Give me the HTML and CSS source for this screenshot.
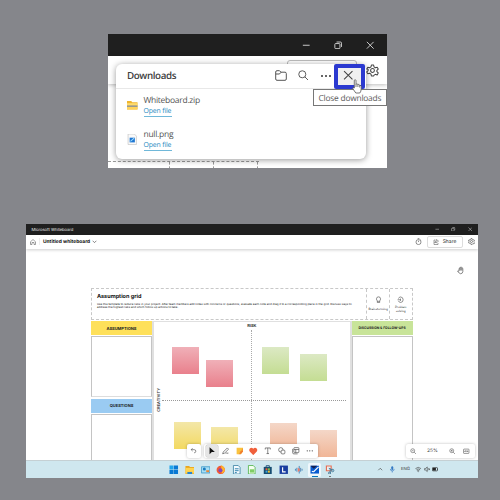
FILE: index.html
```html
<!DOCTYPE html>
<html lang="en">
<head>
<meta charset="utf-8">
<title>Whiteboard</title>
<link rel="stylesheet" href="styles.css">
</head>
<body>
<svg width="0" height="0" class="defs">
  <defs>
    <symbol id="gear" viewBox="0 0 24 24"><path d="M10 2h4l.8 3.400 2.500 1.500 3.300-1 2 3.500-2.500 2.400v2.400l2.500 2.400-2 3.500-3.300-1-2.500 1.500L14 22h-4l-.8-3.400-2.500-1.500-3.300 1-2-3.500 2.500-2.400V9.800L1.400 9.400l2-3.500 3.300 1 2.500-1.500z"/><circle cx="12" cy="12" r="3.500"/></symbol>
    <symbol id="restore" viewBox="0 0 10 10"><rect x="1" y="3" width="6" height="6" rx="1"/><path d="M3 1.200h4.500q1.300 0 1.300 1.300V7"/></symbol>
    <symbol id="close" viewBox="0 0 10 10"><path d="M1 1l8 8M9 1l-8 8"/></symbol>
    <symbol id="min" viewBox="0 0 10 10"><path d="M1 5h8"/></symbol>
  </defs>
</svg>

<section class="shot popup-shot">
  <div class="titlebar">
    <svg class="ic"><use href="#min"/></svg>
    <svg class="ic"><use href="#restore"/></svg>
    <svg class="ic"><use href="#close"/></svg>
  </div>
  <div class="appbar"><div class="ghost-button"></div><svg class="ic gear"><use href="#gear"/></svg></div>
  <div class="dashes"><i></i><i></i><i></i></div>
  <div class="downloads">
    <header>
      <h1>Downloads</h1>
      <svg class="hi folder" viewBox="0 0 12 11"><path d="M.7 9V2Q.7.700 2 .7h2.500L6 2.200h4q1.300 0 1.300 1.300V9q0 1.300-1.300 1.300H2Q.7 10.300.7 9zM.7 4h3.800L6 2.200"/></svg>
      <svg class="hi search" viewBox="0 0 11 11"><circle cx="4.500" cy="4.500" r="3.700"/><path d="M7.200 7.200l3.300 3.300"/></svg>
      <svg class="hi dots" viewBox="0 0 12 4"><circle cx="2" cy="2" r="1"/><circle cx="6" cy="2" r="1"/><circle cx="10" cy="2" r="1"/></svg>
    </header>
    <div class="file">
      <svg class="fi" viewBox="0 0 10 10"><path fill="#efb52f" d="M0 1h4l1 1.200h5V9H0z"/><path fill="#ffdb6c" d="M0 3h10v2.500H0z"/><path fill="#8a94a0" d="M0 5.200h10v1.400H0z"/><path fill="#ffd35a" d="M0 6.600h10V9H0z"/></svg>
      <div><p>Whiteboard.zip</p><a>Open file</a></div>
    </div>
    <div class="file second">
      <svg class="fi" viewBox="0 0 10 10"><path fill="#fafafa" stroke="#b5b5b5" stroke-width=".5" d="M1 0h6l2 2v8H1z"/><path fill="#1f76d2" d="M2.500 3.500h5v4.500h-5z"/><path d="M3.300 7l3.500-3" stroke="#9bdcff"/></svg>
      <div><p>null.png</p><a>Open file</a></div>
    </div>
  </div>
  <div class="highlight"><svg class="ic"><use href="#close"/></svg></div>
  <div class="tooltip">Close downloads</div>
  <svg class="pointer" viewBox="0 0 10 15"><path d="M2.300 9V1.700Q2.300.7 3.100.7T4 1.700V5.500Q4.300 4.600 5.100 4.900T5.900 5.900Q6.400 5 7.100 5.500T7.700 6.500Q9.200 6 9.200 7.500V10Q9.200 12.300 7.800 14H3.800L.7 9.500Q.6 8.200 2.300 9zM4 5.500V8M5.900 5.900V8M7.700 6.500V8.500"/></svg>
</section>

<section class="shot board-shot">
  <div class="titlebar small"><span>Microsoft Whiteboard</span>
    <svg class="ic"><use href="#min"/></svg>
    <svg class="ic"><use href="#restore"/></svg>
    <svg class="ic"><use href="#close"/></svg>
  </div>
  <div class="toolbar">
    <svg class="ti home" viewBox="0 0 12 12"><path d="M1 5.500L6 1l5 4.500V11H8V7H4v4H1z"/></svg>
    <i class="sep"></i>
    <b>Untitled whiteboard</b>
    <svg class="ti chev" viewBox="0 0 8 6"><path d="M1 1l3 3 3-3"/></svg>
    <svg class="ti timer" viewBox="0 0 12 12"><circle cx="6" cy="7" r="4.300"/><path d="M4.500 1h3M6 4.500V7M9.500 3l1 1"/></svg>
    <div class="share"><svg class="ti" viewBox="0 0 12 12"><path d="M5 2H2v9h8V8M7 1l4 3.200-4 3.200V5.500Q4.500 5.500 3.800 8 4 3.500 7 3z"/></svg><span>Share</span></div>
    <svg class="ti setting"><use href="#gear"/></svg>
  </div>

  <div class="canvas">
    <svg class="hand" viewBox="0 0 14 14"><path d="M3.500 8V3.500q.7-1.200 1.600 0V2q.8-1.200 1.700 0v-.3q.9-1 1.700.3V3q.9-1 1.700.3V9q-.4 3.500-3.800 3.700Q3.800 12.500 1 8q.8-1.200 2.500.8M5.100 3.500V7M6.800 2v5M8.500 3v4"/></svg>
    <div class="template">
      <div class="head">
        <div class="intro"><h2>Assumption grid</h2><p>Use this template to reduce risks in your project. After team members add notes with concerns or questions, evaluate each note and drag it to a corresponding place in the grid. Discuss ways to<br>address the highest risks and which follow up actions to take.</p></div>
        <div class="tag"><svg class="ti" viewBox="0 0 12 12"><path d="M4 8Q2.500 6.500 2.500 4.500 2.500 1 6 1t3.500 3.500Q9.500 6.500 8 8v2.800H4zM4 8.700h4"/></svg><span>Brainstorming</span></div>
        <div class="tag"><svg class="ti" viewBox="0 0 12 12"><path d="M2.500 4Q3.500 1.200 6.300 1.200 10.500 1.700 10.500 6T6.300 10.700Q3.500 10.700 2.500 8M1 6h5M6 4v4"/></svg><span>Problem<br>solving</span></div>
      </div>
      <div class="columns">
        <div class="side left">
          <div class="label yellow">ASSUMPTIONS</div><div class="box first"></div>
          <div class="label blue">QUESTIONS</div><div class="box"></div>
        </div>
        <div class="matrix"><span class="risk">RISK</span><span class="creativity">CREATIVITY</span><i class="axis-v"></i><i class="axis-h"></i></div>
        <div class="side right"><div class="label green">DISCUSSION &amp; FOLLOW-UPS</div><div class="box"></div></div>
      </div>
    </div>
    <i class="note red n1"></i><i class="note red n2"></i><i class="note lime n3"></i><i class="note lime n4"></i>
    <i class="note gold n5"></i><i class="note gold n6"></i><i class="note peach n7"></i><i class="note peach n8"></i>

    <div class="float undo"><svg class="ti" viewBox="0 0 12 12"><path d="M4.500 2L2 4.500 4.500 7M2 4.500h5q3 0 3 2.700T7 10"/></svg></div>
    <div class="float tools">
      <span class="cell active"><svg viewBox="0 0 12 12"><path fill="#111" d="M2.500.5v11L6 8h5z"/></svg></span>
      <span class="cell"><svg class="ti" viewBox="0 0 12 12"><path d="M2 8l6.500-6.500 2 2L4 10l-3 .8zM6 11q1.500-3 2.500-1.300T11 9"/></svg></span>
      <span class="cell"><svg viewBox="0 0 12 12"><path fill="#f9c33f" d="M1 1h10.500v6L8 11.500H1z"/><path fill="#f0762e" d="M11.500 1v6L7 11.500H4L7 7z" opacity=".6"/><path fill="#f0762e" d="M11.500 6.500L7 11.500V7z"/></svg></span>
      <span class="cell"><svg class="heart" viewBox="0 0 12 12"><path fill="#f0603c" d="M6 11.500L1 6.500Q-.6 3.500 1.600 1.600 4 .2 6 2.500 8 .2 10.400 1.600 12.600 3.500 11 6.500z"/></svg></span>
      <span class="cell"><svg class="ti" viewBox="0 0 12 12"><path d="M2 4V1.500h8V4M6 1.500v9M4 10.500h4"/></svg></span>
      <span class="cell"><svg class="ti" viewBox="0 0 12 12"><circle cx="4.500" cy="4.500" r="3.500"/><rect x="5" y="5" width="6" height="6" rx="1.500" fill="#fff"/></svg></span>
      <span class="cell"><svg class="ti" viewBox="0 0 12 12"><rect x="3" y="1" width="8" height="8" rx="1"/><path d="M1 3v6q0 2 2 2h6M3 4h8M6 4v5"/></svg></span>
      <span class="cell"><svg viewBox="0 0 12 12" fill="#444"><circle cx="2" cy="6" r="1"/><circle cx="6" cy="6" r="1"/><circle cx="10" cy="6" r="1"/></svg></span>
    </div>
    <div class="float zoom">
      <svg class="ti" viewBox="0 0 12 12"><circle cx="5" cy="5" r="3.600"/><path d="M7.700 7.700L11 11M3.500 5h3"/></svg>
      <span>25%</span>
      <svg class="ti" viewBox="0 0 12 12"><circle cx="5" cy="5" r="3.600"/><path d="M7.700 7.700L11 11M3.500 5h3M5 3.500v3"/></svg>
      <svg class="ti" viewBox="0 0 12 12"><rect x="1" y="2" width="10" height="8" rx="1"/><path d="M3 6h6M4.500 4.500L3 6l1.500 1.500M7.500 4.500L9 6 7.500 7.500"/></svg>
    </div>
  </div>

  <div class="taskbar">
    <div class="apps">
      <span><svg viewBox="0 0 10 10" fill="#0879d4"><path fill="#22a5ec" d="M.5.5h4.300v4.300H.5z"/><path d="M5.200.5h4.300v4.300H5.200zM.5 5.200h4.300v4.300H.5zM5.200 5.200h4.300v4.300H5.200z"/></svg></span>
      <span><svg viewBox="0 0 10 10"><path fill="#e9a51d" d="M.5 1h3.800l1 1h4.200v7.500h-9z"/><path fill="#ffd34f" d="M.5 3h9v6h-9z"/><path fill="#2785cf" d="M2.500 7.300h5v2.200h-5z"/></svg></span>
      <span><svg viewBox="0 0 10 10"><path fill="#2b91c8" d="M.3 1.500h9.400v7.300H.3z"/><path fill="#a7def3" d="M1 2.300h8v5.700H1z"/><circle cx="3.500" cy="4.300" r="1.600" fill="#1a7cc0"/><path fill="#e88635" d="M5.500 5.500h3v2h-3z"/></svg></span>
      <span><svg viewBox="0 0 10 10"><circle cx="5" cy="5.300" r="4.400" fill="#f15a35"/><path fill="#ffb52b" d="M5.500 0Q9.700 2.500 9.300 6 8 9 5 9 8 7 5.500 4z"/><circle cx="4.700" cy="5.500" r="2.100" fill="#8149bd"/></svg></span>
      <span><svg viewBox="0 0 10 10"><path fill="#f4fbff" stroke="#2b789c" stroke-width=".8" d="M1.500.5h5l2 2v7h-7z"/><path stroke="#287daa" d="M3 4h4M3 6h4M3 8h2"/></svg></span>
      <span><svg viewBox="0 0 10 10"><path fill="#f4fff1" stroke="#43ad3c" stroke-width=".8" d="M1.500.5h5l2 2v7h-7z"/><path fill="#7fcd66" d="M3 4.500h4.500V8H3z"/></svg></span>
      <span><svg viewBox="0 0 10 10"><path fill="#174d72" d="M.8 2h8.400v7.500H.8z"/><path fill="none" stroke="#174d72" d="M3.300 2V.8h3.400V2"/><path fill="#ed5a35" d="M2.700 3.500h2v2h-2z"/><path fill="#7cc344" d="M5.200 3.500h2v2h-2z"/><path fill="#34a9e2" d="M2.700 6h2v2h-2z"/><path fill="#f5c431" d="M5.200 6h2v2h-2z"/></svg></span>
      <span><svg viewBox="0 0 10 10"><path fill="#193ea0" d="M.6.6h8.800v8.800H.6z"/><path stroke="#fff" stroke-width="1.200" fill="none" d="M3.800 2.300v5H7"/></svg></span>
      <span><svg viewBox="0 0 10 10"><path stroke="#4689bd" d="M1.500 4v2M3 3v4M8.500 4v2M7 3v4M5.500 1v8"/><path fill="#e77e70" d="M4 2.500L7 5 4 7.500z"/></svg></span>
      <span class="open"><svg viewBox="0 0 10 10"><path fill="#075bd1" d="M.5.800h9v8.200h-9z"/><path fill="#111f51" d="M.5.800h7L4 4z"/><path stroke="#fff" stroke-width="1.200" fill="none" d="M2 6.500q1.500 1.500 3-.5l4-4"/></svg></span>
      <span class="running"><svg viewBox="0 0 10 10"><path fill="#eee" stroke="#e56f55" stroke-width="1.200" d="M1.500 1h5v5h-5z"/><path stroke="#467d9b" fill="none" d="M4 3.500l4.500 2M5.500 3.500V9"/><circle cx="8" cy="5.800" r="1.300" fill="none" stroke="#467d9b"/><circle cx="4.800" cy="8.500" r="1.100" fill="none" stroke="#467d9b"/></svg></span>
    </div>
    <div class="tray">
      <svg class="ti" viewBox="0 0 10 10"><path d="M2 6.500l3-3 3 3"/></svg>
      <svg class="mic" viewBox="0 0 10 10"><rect x="3.500" y=".5" width="3" height="5.500" rx="1.500" fill="#3479c4"/><path d="M2 4.500Q2 7.500 5 7.500T8 4.500M5 7.500V10" fill="none" stroke="#3479c4"/></svg>
      <span>ENG</span>
      <svg class="ti" viewBox="0 0 10 10"><path d="M.7 4Q5 .2 9.300 4M2.200 5.800Q5 3.300 7.800 5.800M3.700 7.400Q5 6.300 6.300 7.400L5 8.700z"/></svg>
      <svg class="ti" viewBox="0 0 10 10"><path d="M1 3.800h1.500L5 1.500v7L2.500 6.300H1zM6.700 3.500l2.500 3M9.200 3.500l-2.500 3"/></svg>
      <svg class="battery" viewBox="0 0 10 10"><rect x=".5" y="2.500" width="8" height="5" rx="1" fill="none" stroke="#222"/><path fill="#222" d="M1 3h5v4H1zM8.700 4h1v2h-1z"/></svg>
    </div>
  </div>
</section>
</body>
</html>
```

FILE: styles.css
```css
* { box-sizing: border-box; }
body { margin: 0; width: 500px; height: 500px; overflow: hidden; background: #85868b; font-family: "Open Sans", "Noto Sans", sans-serif; color: #333; text-rendering: geometricPrecision; }
h1, h2, p { margin: 0; }
svg { display: block; flex: none; }
.defs { position: absolute; }
.shot { position: relative; background: #fff; overflow: hidden; }
.ic, .ti, .hi { fill: none; stroke: #444; stroke-linejoin: round; }
.titlebar { display: flex; align-items: center; justify-content: flex-end; background: #1f1f1f; }
.titlebar .ic { stroke: #e5e5e5; }

.popup-shot { margin: 34px 0 0 108px; width: 278.500px; height: 133.500px; }
.popup-shot .titlebar { height: 22px; padding-right: 12px; gap: 23.500px; }
.popup-shot .titlebar .ic { width: 8.500px; height: 8.500px; }
.appbar { display: flex; justify-content: flex-end; height: 28px; padding: 3.500px 7.500px 0 0; gap: 10px; box-shadow: 0 1px 4px #0004; }
.ghost-button { width: 70px; height: 24px; border: 1px solid #bbb; border-radius: 3px; }
.gear { width: 13px; height: 13px; margin-top: 4.500px; stroke-width: 1.900; margin-left: -1px; }
.dashes { display: flex; width: 150.500px; height: 8px; margin-top: 77px; border-top: 1px dashed #999; }
.dashes i { width: 44px; border-right: 1px dashed #999; }
.dashes i:first-child { width: 62px; }
.downloads { position: absolute; left: 7.500px; top: 29.500px; width: 250.500px; height: 95.500px; border-radius: 6px; background: #fff; box-shadow: 0 1px 6px #0006; }
.downloads header { display: flex; align-items: center; height: 25px; padding: 0 34.500px 0 11.500px; border-bottom: 1px solid #e8e8e8; }
.downloads h1 { flex: 1; font-size: 9.800px; font-weight: 600; letter-spacing: -.4px; line-height: 22px; color: #404040; }
.hi { stroke: #555; }
.folder { width: 12px; height: 11px; margin-right: 11px; }
.search { width: 10.500px; height: 10.500px; margin-right: 11.500px; }
.dots { width: 12px; height: 4px; fill: #333; stroke: none; }
.file { display: flex; align-items: flex-start; gap: 6px; height: 34.200px; padding: 6.800px 0 0 11.500px; }
.fi { width: 10.500px; height: 10.500px; margin-top: 5px; }
.file p { font-size: 8.500px; letter-spacing: -.28px; line-height: 11px; color: #555; }
.file a { display: block; width: 28px; height: 10.800px; font-size: 6.900px; letter-spacing: -.15px; line-height: 11.500px; color: #2489c0; white-space: nowrap; border-bottom: 1px solid #70b8d9; }
.highlight { position: absolute; left: 226px; top: 29.500px; width: 31px; height: 25.500px; border: 4px solid #2b39d0; border-radius: 2px; background: #f0f0f0; display: flex; padding: 2px 0 0 4.500px; }
.highlight .ic { width: 10.500px; height: 10.500px; }
.tooltip { position: absolute; left: 205px; top: 54.500px; width: 74px; height: 17.500px; border: 1px solid #777; background: #fff; font-size: 8.400px; letter-spacing: -.22px; line-height: 17px; padding-left: 4.500px; color: #5c5c5c; white-space: nowrap; }
.pointer { position: absolute; left: 244px; top: 44.500px; width: 10px; height: 15px; fill: #fff; stroke: #555; stroke-width: .8; }

.board-shot { margin: 56px 0 0 26px; width: 452px; height: 254px; display: flex; flex-direction: column; font-family: Inter, "Open Sans", sans-serif; }
.small { height: 11px; flex: none; gap: 10px; padding-right: 6px; }
.small span { margin-right: auto; padding: .5px 0 0 5.500px; font-size: 4.100px; color: #eee; }
.small .ic { width: 4.500px; height: 4.500px; margin-left: 2px; }
.toolbar { position: relative; z-index: 1; flex: none; display: flex; align-items: center; height: 14.500px; padding: 0 3.500px 0 4px; background: #fff; box-shadow: 0 1px 3px #0003; }
.toolbar b { font-size: 4.900px; font-weight: 700; color: #111; padding-top: .5px; }
.home { width: 6px; height: 6px; }
.sep { width: 1px; height: 7px; margin: 0 3px; background: #eee; }
.chev { width: 5px; height: 4px; margin-left: 2px; }
.timer { width: 7px; height: 7px; margin-left: auto; margin-right: 5px; }
.share { display: flex; align-items: center; justify-content: center; gap: 4px; width: 36px; height: 12px; border: 1px solid #ddd; border-radius: 2px; font-size: 5px; margin-right: 5px; }
.share .ti { width: 6px; height: 6px; }
.setting { width: 7px; height: 7px; stroke-width: 2; }

.canvas { position: relative; flex: 1; overflow: hidden; padding: 39px 0 0 65px; }
.hand { position: absolute; left: 431px; top: 17px; width: 8px; height: 9px; fill: none; stroke: #444; stroke-width: 1.100; }
.template { width: 321.500px; height: 180px; display: flex; flex-direction: column; }
.head { display: flex; height: 31.500px; border: 1px dashed #c8c8c8; }
.intro { flex: 1; padding: 3.500px 0 0 5px; white-space: nowrap; min-width: 0; }
.intro h2 { font-size: 5.500px; line-height: 8px; font-weight: 700; color: #111; }
.intro p { width: 256px; margin-top: 2px; font-size: 2.815px; line-height: 3.900px; color: #111; }
.tag { display: flex; flex-direction: column; align-items: center; width: 22.600px; border-left: 1px dashed #c8c8c8; padding-top: 6.500px; font-size: 2.950px; line-height: 3.700px; text-align: center; color: #111; }
.tag .ti { width: 7px; height: 7.500px; margin-bottom: 2.800px; }
.tag:nth-child(2) span { padding-top: 2.200px; }
.columns { display: flex; flex: 1; padding-top: 1.200px; }
.side { display: flex; flex-direction: column; width: 61px; }
.label { height: 14px; font-size: 4px; line-height: 15px; font-weight: 700; text-align: center; color: #222; flex: none; }
.yellow { background: #fee05a; }
.blue { background: #9acbf2; line-height: 13.500px; }
.green { background: #c8e499; font-size: 3.350px; white-space: nowrap; }
.box { flex: 1; margin-top: 1.500px; border: 1px solid #c4c4c4; border-bottom: 0; }
.box.first { flex: none; height: 61px; margin-bottom: 1.500px; border-bottom: 1px solid #ddd; }
.matrix { position: relative; flex: 1; border: solid #e0e0e0; border-width: 1px 2px 0; }
.risk { display: block; text-align: center; font-size: 4px; line-height: 7.500px; font-weight: 700; }
.creativity { position: absolute; left: 2px; top: 66px; writing-mode: vertical-rl; transform: rotate(180deg); font-size: 4px; line-height: 5px; font-weight: 600; }
.axis-v { position: absolute; left: 97px; top: 8px; height: 140px; border-left: 1.500px dotted #aaa; }
.axis-h { position: absolute; left: 8px; top: 78px; width: 184px; border-top: 1px dotted #999; }
.note { position: absolute; width: 27px; height: 27px; }
.red { background: linear-gradient(#f0b0b8, #e9808c); }
.lime { background: linear-gradient(#dce9c4, #c4dd93); }
.gold { background: linear-gradient(#f3e7a8, #f3d961); }
.peach { background: linear-gradient(#f4d7c8, #f1b697); }
.n1 { left: 146px; top: 97.500px; }
.n2 { left: 179.500px; top: 111px; }
.n3 { left: 236.200px; top: 98px; }
.n4 { left: 274px; top: 105px; }
.n5 { left: 148.300px; top: 173px; }
.n6 { left: 185px; top: 178px; }
.n7 { left: 243.800px; top: 174px; }
.n8 { left: 284px; top: 181px; }
.float { position: absolute; top: 195px; height: 13.500px; display: flex; align-items: center; background: #fff; border-radius: 2px; box-shadow: 0 0 3px #0004; }
.undo { left: 160.500px; width: 14px; justify-content: center; }
.undo svg { width: 7px; height: 7px; }
.tools { left: 178px; width: 113.500px; padding: 0 1.500px; gap: 2px; }
.cell { width: 12.050px; height: 11.500px; display: flex; align-items: center; justify-content: center; border-radius: 1.500px; }
.cell.active { background: #e5e5e5; box-shadow: 0 0 0 .5px #ccc; }
.cell svg { width: 7.500px; height: 7.500px; }
.cell .heart { width: 8.500px; height: 8.500px; }
.zoom { left: 379.500px; width: 69.500px; padding: 0 5.500px 0 4px; }
.zoom svg { width: 6.500px; height: 6.500px; }
.zoom svg:last-child { margin-left: 7.500px; }
.zoom span { flex: 1; text-align: center; font-size: 4.900px; }
.taskbar { flex: none; display: flex; align-items: center; height: 17.500px; padding-left: 140.300px; background: #cfe7ef; border-top: 1px solid #c5d0d4; }
.apps { display: flex; }
.apps span { width: 15.600px; display: flex; justify-content: center; position: relative; }
.apps svg { width: 9.500px; height: 9.500px; position: relative; }
.apps .open::before { content: ""; position: absolute; inset: -2px 1px -3px; background: #eff7fb; border-radius: 1.500px; }
.apps .open::after { content: ""; position: absolute; left: 5px; bottom: -3px; width: 6px; height: 1px; background: #0876bd; }
.apps .running::after { content: ""; position: absolute; left: 7px; bottom: -3px; width: 2px; height: 1px; background: #777; }
.tray { margin-left: auto; padding-right: 40px; display: flex; align-items: center; font-size: 4.300px; }
.tray svg { width: 6.500px; height: 6.500px; }
.tray .mic { margin: 0 5.500px 0 5px; }
.tray span { margin-right: 5px; padding-top: .5px; }
.tray span + svg { margin-right: 2px; }
.tray .battery { margin-left: 1.500px; }
```
